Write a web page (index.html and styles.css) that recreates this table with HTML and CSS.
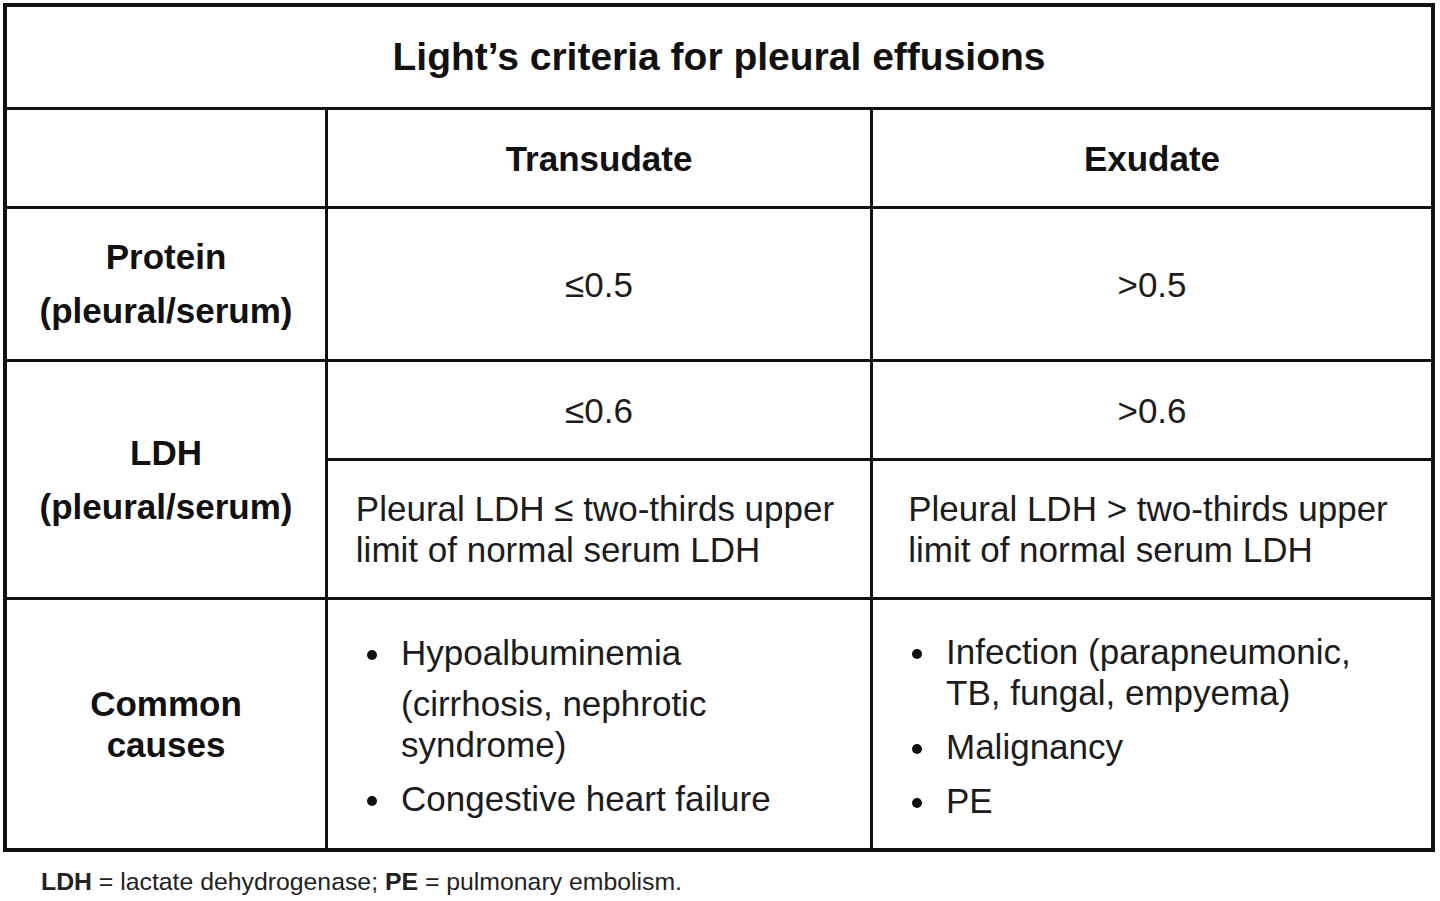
FILE: index.html
```html
<!DOCTYPE html>
<html lang="en">
<head>
<meta charset="utf-8">
<title>Light's criteria for pleural effusions</title>
<link rel="stylesheet" href="styles.css">
</head>
<body>
<div class="page">
  <div class="criteria">
    <div class="cell title span-all">Light’s criteria for pleural effusions</div>

    <div class="cell"></div>
    <div class="cell head">Transudate</div>
    <div class="cell head last-col">Exudate</div>

    <div class="cell label tall">Protein<br>(pleural/serum)</div>
    <div class="cell value">≤0.5</div>
    <div class="cell value last-col">&gt;0.5</div>

    <div class="cell label tall ldh">LDH<br>(pleural/serum)</div>
    <div class="cell value">≤0.6</div>
    <div class="cell value last-col">&gt;0.6</div>
    <div class="cell value text-cell"><div class="block">Pleural LDH ≤ two-thirds upper<br>limit of normal serum LDH</div></div>
    <div class="cell value text-cell last-col"><div class="block">Pleural LDH &gt; two-thirds upper<br>limit of normal serum LDH</div></div>

    <div class="cell label last-row">Common<br>causes</div>
    <div class="cell list-cell last-row">
      <ul class="bullets">
        <li><span class="dot"></span><div class="item">Hypoalbuminemia<span class="sub">(cirrhosis, nephrotic<br>syndrome)</span></div></li>
        <li><span class="dot"></span><div class="item">Congestive heart failure</div></li>
      </ul>
    </div>
    <div class="cell list-cell last-row last-col">
      <ul class="bullets">
        <li><span class="dot"></span><div class="item">Infection (parapneumonic,<br>TB, fungal, empyema)</div></li>
        <li><span class="dot"></span><div class="item">Malignancy</div></li>
        <li><span class="dot"></span><div class="item">PE</div></li>
      </ul>
    </div>
  </div>
  <p class="footnote"><b>LDH</b> = lactate dehydrogenase; <b>PE</b> = pulmonary embolism.</p>
</div>
</body>
</html>
```

FILE: styles.css
```css
html, body {
  margin: 0;
  padding: 0;
  background: #ffffff;
}

body {
  font-family: "Liberation Sans", Arial, sans-serif;
  color: #1c1c1c;
}

.page {
  padding: 3px 0 0 3px;
}

.criteria {
  display: grid;
  grid-template-columns: 321px 545px 558px;
  grid-template-rows: 103px 99px 153px 99px 139px 248px;
  width: 1432px;
  box-sizing: border-box;
  border: 4px solid #111111;
}

.cell {
  box-sizing: border-box;
  border-right: 3px solid #111111;
  border-bottom: 3px solid #111111;
  display: flex;
  align-items: center;
  justify-content: center;
  text-align: center;
  font-size: 35px;
  line-height: 41px;
}

.last-col {
  border-right: none;
}

.last-row {
  border-bottom: none;
}

.span-all {
  grid-column: 1 / 4;
  border-right: none;
}

.title {
  font-size: 39px;
  font-weight: bold;
  color: #111111;
  padding-bottom: 2px;
}

.head {
  font-weight: bold;
  color: #111111;
}

.label {
  font-weight: bold;
  color: #111111;
}

.tall {
  line-height: 54px;
}

.ldh {
  grid-row: 4 / 6;
  padding-top: 1px;
}

.text-cell {
  padding-right: 8px;
}

.block {
  text-align: left;
}

.list-cell {
  justify-content: flex-start;
  padding-left: 38px;
  padding-top: 3px;
}

.bullets {
  list-style: none;
  margin: 0;
  padding: 0;
  display: flex;
  flex-direction: column;
  gap: 13px;
  text-align: left;
}

.bullets li {
  display: flex;
  align-items: flex-start;
}

.dot {
  flex: none;
  width: 35px;
  height: 41px;
  display: flex;
  justify-content: flex-start;
}

.dot::before {
  content: "";
  display: block;
  width: 10px;
  height: 10px;
  border-radius: 50%;
  background: #111111;
  margin-top: 18px;
  margin-left: 1px;
}

.sub {
  display: block;
  margin-top: 10px;
}

.footnote {
  margin: 16px 0 0 38px;
  font-size: 24.8px;
  line-height: 28px;
  color: #222222;
}

.footnote b {
  font-weight: bold;
}
```
